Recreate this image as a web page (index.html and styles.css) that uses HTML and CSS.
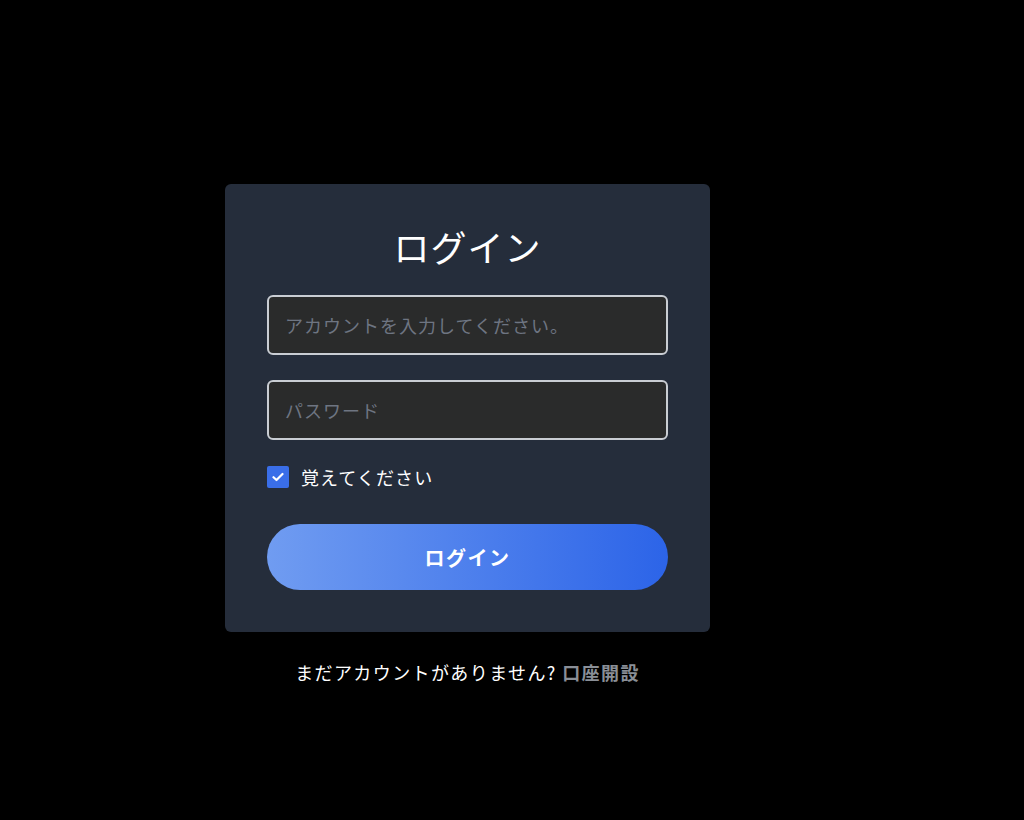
FILE: index.html
```html
<!DOCTYPE html>
<html lang="ja">
<head>
<meta charset="utf-8">
<title>ログイン</title>
<link rel="stylesheet" href="styles.css">
</head>
<body>
<main class="page">
  <form class="card">
    <h1 class="title">ログイン</h1>
    <input class="field" type="text" placeholder="アカウントを入力してください。">
    <input class="field" type="password" placeholder="パスワード">
    <label class="remember">
      <span class="check">
        <svg width="12" height="10" viewBox="0 0 12 10"><path d="M1.5 5.2 L4.5 8 L10.5 2" fill="none" stroke="#fff" stroke-width="2.2" stroke-linecap="round" stroke-linejoin="round"/></svg>
      </span>
      <span class="remember-text">覚えてください</span>
    </label>
    <button class="btn" type="button">ログイン</button>
  </form>
  <p class="footer">まだアカウントがありません? <a class="link" href="#">口座開設</a></p>
</main>
</body>
</html>
```
FILE: styles.css
```css
html, body {
  margin: 0;
  padding: 0;
  background: #000;
  height: 100%;
}
body {
  font-family: "Noto Sans CJK JP", "Noto Sans", sans-serif;
  color: #fff;
}
.page {
  display: flex;
  flex-direction: column;
  align-items: flex-start;
  padding-top: 184px;
  padding-left: 225px;
}
.card {
  width: 485px;
  box-sizing: border-box;
  background: #252d3b;
  border-radius: 6px;
  padding: 40px 42px 42px;
  display: flex;
  flex-direction: column;
}
.title {
  margin: 0 0 27px;
  font-size: 36px;
  font-weight: 400;
  line-height: 44px;
  letter-spacing: 1px;
  text-align: center;
  color: #fff;
}
.field {
  height: 60px;
  box-sizing: border-box;
  border: 2px solid #c9cdd3;
  border-radius: 6px;
  background: #2a2b2b;
  padding: 0 16px;
  font-family: inherit;
  font-size: 18px;
  letter-spacing: 1px;
  color: #fff;
  outline: none;
  margin: 0 0 25px;
}
.field:nth-of-type(2) { margin-bottom: 26px; }
.field::placeholder { color: #6e7582; }
.remember {
  display: flex;
  align-items: center;
  gap: 12px;
  height: 22px;
  margin-bottom: 36px;
}
.check {
  width: 22px;
  height: 22px;
  background: #3a6ee8;
  border-radius: 2px;
  display: flex;
  align-items: center;
  justify-content: center;
}
.remember-text {
  font-size: 18px;
  letter-spacing: 1.1px;
  color: #fff;
  line-height: 22px;
}
.btn {
  height: 66px;
  border: none;
  border-radius: 33px;
  background: linear-gradient(to right, #709cf1, #2c64e8);
  color: #fff;
  font-family: inherit;
  font-size: 20px;
  font-weight: 700;
  letter-spacing: 1.5px;
  cursor: pointer;
}
.footer {
  width: 485px;
  text-align: center;
  margin: 28px 0 0;
  font-size: 18px;
  line-height: 24px;
  letter-spacing: 1.4px;
  color: #fff;
}
.link {
  color: #8a8f97;
  font-weight: 700;
  text-decoration: none;
}
```
